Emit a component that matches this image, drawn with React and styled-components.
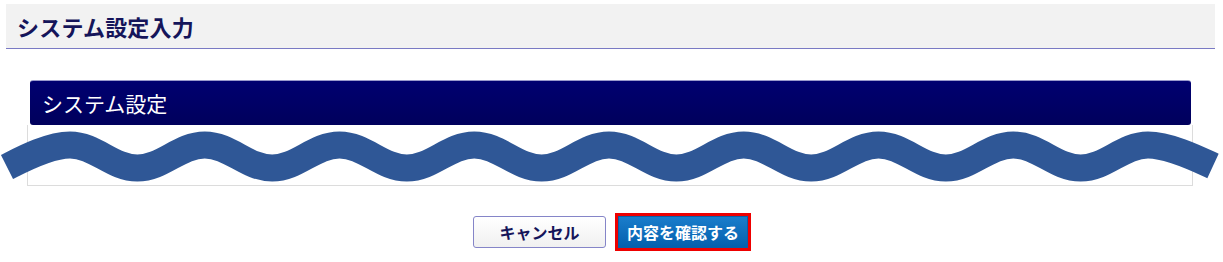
import React from "react";
import styled, { createGlobalStyle } from "styled-components";

const GlobalStyle = createGlobalStyle`
  html, body {
    margin: 0;
    padding: 0;
    background: #fff;
    font-family: "Noto Sans CJK JP", "Noto Sans", sans-serif;
  }
`;

const Page = styled.div`
  position: relative;
  width: 1223px;
  height: 262px;
  padding: 4px 8px 0 6px;
  box-sizing: border-box;
  overflow: hidden;
`;

const PageHeader = styled.div`
  height: 44px;
  background: #f2f2f2;
  border-bottom: 1px solid #7a7ac4;
  display: flex;
  align-items: center;
  padding-left: 11px;
`;

const PageTitle = styled.h1`
  margin: 0;
  font-size: 22px;
  font-weight: 700;
  color: #15155a;
  letter-spacing: 0.2px;
`;

const Section = styled.section`
  margin: 31px 0 0 21px;
  width: 1166px;
`;

const SectionBar = styled.div`
  margin: 0 2px 0 3px;
  height: 45px;
  border-radius: 3px;
  background: linear-gradient(#000070, #00005c);
  border-top: 1px solid #9a9acc;
  box-sizing: border-box;
  display: flex;
  align-items: center;
  padding-left: 12px;
  color: #fff;
  font-size: 21px;
`;

const SectionBody = styled.div`
  height: 60px;
  border: 1px solid #dcdcdc;
  border-top: none;
`;

const ButtonRow = styled.div`
  display: flex;
  justify-content: center;
  gap: 12px;
  margin-top: 30px;
`;

const Button = styled.button`
  height: 32px;
  width: ${(p) => p.$width}px;
  border-radius: ${(p) => (p.$marked ? 0 : 3)}px;
  font-family: inherit;
  font-size: 16px;
  font-weight: 700;
  cursor: pointer;
  display: flex;
  align-items: center;
  justify-content: center;
  padding: 0;
  border: 1px solid ${(p) => (p.$primary ? "#0a5ea8" : "#8585c8")};
  color: ${(p) => (p.$primary ? "#fff" : "#15155a")};
  background: ${(p) =>
    p.$primary
      ? "linear-gradient(#1a7dcb, #0360ae)"
      : "linear-gradient(#ffffff, #f0f0f0)"};
  outline: ${(p) => (p.$marked ? "3px solid #ee0000" : "none")};
`;

const Wave = styled.svg`
  position: absolute;
  left: 0;
  top: 0;
  pointer-events: none;
`;

function wavePath() {
  const period = 134.75;
  const half = period / 2;
  const top = 145;
  const bottom = 168;
  let d = `M 7 167 C 19 161, 48 ${top}, 70 ${top}`;
  let x = 70;
  for (let k = 0; k < 8; k++) {
    d += ` C ${x + half * 0.38} ${top}, ${x + half * 0.62} ${bottom}, ${x + half} ${bottom}`;
    x += half;
    d += ` C ${x + half * 0.38} ${bottom}, ${x + half * 0.62} ${top}, ${x + half} ${top}`;
    x += half;
  }
  d += ` C ${x + 22} ${top}, ${x + 52} 160, 1213 166`;
  return d;
}

export default function App() {
  return (
    <Page>
      <GlobalStyle />
      <PageHeader>
        <PageTitle>システム設定入力</PageTitle>
      </PageHeader>
      <Section>
        <SectionBar>システム設定</SectionBar>
        <SectionBody />
      </Section>
      <ButtonRow>
        <Button $width={133}>キャンセル</Button>
        <Button $width={130} $primary $marked>
          内容を確認する
        </Button>
      </ButtonRow>
      <Wave width="1223" height="262" viewBox="0 0 1223 262">
        <path
          d={wavePath()}
          fill="none"
          stroke="#2f5796"
          strokeWidth="27"
          strokeLinecap="butt"
        />
      </Wave>
    </Page>
  );
}
